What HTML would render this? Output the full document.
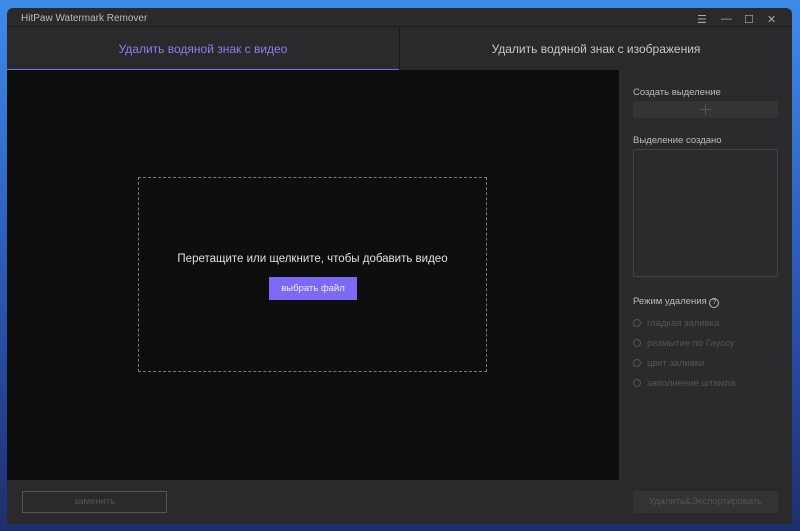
<!DOCTYPE html>
<html><head><meta charset="utf-8"><style>
*{margin:0;padding:0;box-sizing:border-box}
body{width:800px;height:531px;overflow:hidden;background:linear-gradient(180deg,#3f8be8 0%,#2f63c4 40%,#243f8e 80%,#1e2f6a 100%);font-family:"Liberation Sans","DejaVu Sans",sans-serif;position:relative}
.win{position:absolute;left:7px;top:8px;width:785px;height:516px;background:#2a2a2c;border-radius:6px 6px 0 0;overflow:hidden}
.title{position:absolute;left:0;top:0;width:100%;height:18px;color:#bbb;font-size:10px}
.title span{position:absolute;left:14px;top:5px}
.ctrl{position:absolute;top:3px;color:#aaa;font-size:11px}
.tabs{position:absolute;left:0;top:18px;width:100%;height:44px;border-top:1px solid #1b1b1b}
.tab{position:absolute;top:0;height:44px;line-height:44px;text-align:center;font-size:12px;color:#c8c8c8}
.t1{left:0;width:392px;color:#8b7ff0;border-bottom:2px solid #7c6af7}
.t2{left:392px;width:393px;border-left:1px solid #1b1b1b}
.main{position:absolute;left:0;top:62px;width:612px;height:410px;background:#0e0e0f}
.drop{position:absolute;left:131px;top:107px;width:349px;height:195px;border:1px dashed #777}
.drop p{position:absolute;top:75px;width:100%;text-align:center;color:#e0e0e0;font-size:11.5px}
.btn{position:absolute;left:130px;top:99px;width:88px;height:23px;background:#7c6af7;color:#eee;font-size:9.5px;text-align:center;line-height:23px}
.side{position:absolute;left:612px;top:62px;width:173px;height:410px;background:#2b2b2d}
.lab{position:absolute;left:14px;color:#bbb;font-size:9.5px}
.add{position:absolute;left:14px;top:31px;width:145px;height:17px;background:#343436;border-radius:2px}
.add:before{content:"";position:absolute;left:72px;top:3px;width:1px;height:11px;background:#555}
.add:after{content:"";position:absolute;left:67px;top:8px;width:11px;height:1px;background:#555}
.box{position:absolute;left:14px;top:79px;width:145px;height:128px;border:1px solid #444;border-radius:2px}
.r{position:absolute;left:14px;color:#555;font-size:9.5px}
.r i{display:inline-block;width:8px;height:8px;border:1px solid #555;border-radius:50%;margin-right:6px;vertical-align:-1px}
.bot{position:absolute;left:0;top:473px;width:100%;height:43px;background:#2a2a2c}
.b1{position:absolute;left:15px;top:10px;width:145px;height:22px;border:1px solid #555;color:#555;font-size:9.5px;text-align:center;line-height:20px}
.b2{position:absolute;left:626px;top:10px;width:145px;height:22px;background:#333335;color:#555;font-size:9.5px;text-align:center;line-height:22px}
</style></head><body>
<div class="win">
<div class="title"><span>HitPaw Watermark Remover</span>
<span class="ctrl" style="left:690px">☰</span><span class="ctrl" style="left:714px">—</span><span class="ctrl" style="left:737px">☐</span><span class="ctrl" style="left:760px">✕</span></div>
<div class="tabs"><div class="tab t1">Удалить водяной знак с видео</div><div class="tab t2">Удалить водяной знак с изображения</div></div>
<div class="main"><div class="drop"><p>Перетащите или щелкните, чтобы добавить видео</p><div class="btn">выбрать файл</div></div></div>
<div class="side">
<div class="lab" style="top:17px">Создать выделение</div>
<div class="add"></div>
<div class="lab" style="top:65px">Выделение создано</div>
<div class="box"></div>
<div class="lab" style="top:226px">Режим удаления <span style="display:inline-block;width:10px;height:10px;border:1px solid #bbb;border-radius:50%;font-size:7px;text-align:center;line-height:8px">?</span></div>
<div class="r" style="top:248px"><i></i>гладкая заливка</div>
<div class="r" style="top:268px"><i></i>размытие по Гауссу</div>
<div class="r" style="top:288px"><i></i>цвет заливки</div>
<div class="r" style="top:308px"><i></i>заполнение штампа</div>
</div>
<div class="bot"><div class="b1">заменить</div><div class="b2">Удалить&amp;Экспортировать</div></div>
</div>
</body></html>
